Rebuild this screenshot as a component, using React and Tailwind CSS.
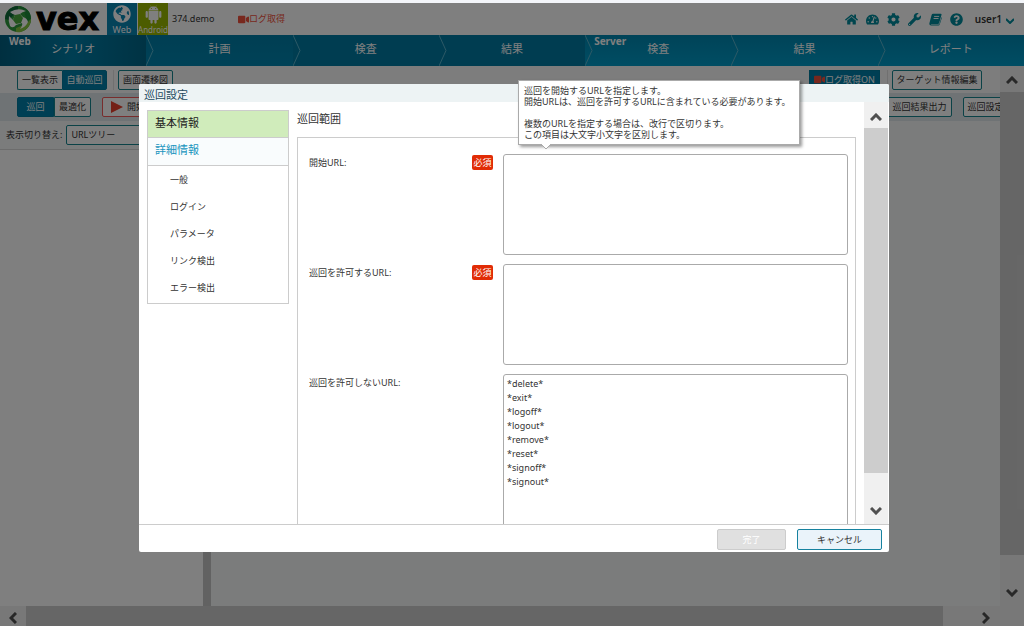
import { FaHome, FaTachometerAlt, FaCog, FaWrench, FaQuestionCircle, FaVideo, FaGlobeAmericas } from "react-icons/fa";
import { AiFillAndroid } from "react-icons/ai";

// Slanted book
const BookIcon = ({ size }) => (
  <svg viewBox="0 0 16 16" width={size} height={size} aria-hidden="true">
    <path
      d="M5 1 H14.500 Q15.800 1 15.400 2.300 L12.400 12.500 Q12 13.500 11 13.500 H3 Q2 13.500 2.300 14.300 H12.500 L15.500 5 Q16 5.300 15.800 6 L13.200 14.300 Q12.800 15.500 11.600 15.500 H2.500 Q0.200 15.300 0.400 12.800 L3.200 2.500 Q3.600 1 5 1 Z"
      fill="currentColor"
    />
    <path d="M6.300 4.200 H12.500 M5.600 6.800 H11.700" stroke="#fff" strokeWidth="1.200" />
  </svg>
);

const tabs = [
  { label: "シナリオ", group: "Web", style: "bg-linear-to-r from-[#005f80] via-[#007da6] to-[#006688]" },
  { label: "計画", style: "bg-linear-to-b from-[#007da6] to-[#0085b0]" },
  { label: "検査", style: "bg-[#007aa3]" },
  { label: "結果", style: "bg-[#007aa3]" },
  { label: "検査", group: "Server", style: "bg-linear-to-b from-[#0087b0] to-[#009bc8]" },
  { label: "結果", style: "bg-linear-to-b from-[#0087b0] to-[#009bc8]" },
  { label: "レポート", style: "bg-linear-to-b from-[#0087b0] to-[#009bc8]" },
];

const tools = [
  { name: "ホーム", Icon: FaHome },
  { name: "ダッシュボード", Icon: FaTachometerAlt },
  { name: "設定", Icon: FaCog },
  { name: "ツール", Icon: FaWrench },
  { name: "マニュアル", Icon: BookIcon },
  { name: "ヘルプ", Icon: FaQuestionCircle },
];

const menuItems = ["一般", "ログイン", "パラメータ", "リンク検出", "エラー検出"];

const denied = ["*delete*", "*exit*", "*logoff*", "*logout*", "*remove*", "*reset*", "*signoff*", "*signout*"].join("\n");

const Chevron = ({ className }) => (
  <svg viewBox="0 0 12 8" className={`w-3 h-2 ${className}`} fill="none" stroke="#505050" strokeWidth="3">
    <path d="M1 7 L6 2 L11 7" />
  </svg>
);

const Logo = () => (
  <svg viewBox="0 0 28 28" className="h-7 w-7 shrink-0" aria-hidden="true">
    <circle cx="14" cy="14" r="13" fill="#2f9a3c" />
    <path d="M1 14 A13 13 0 0 1 14 1 L14 5 L5 15 Z" fill="#0f6a3a" />
    <path d="M14 1 A13 13 0 0 1 27 14 L23 16 L20 6 Z" fill="#1f8a3a" />
    <path d="M27 14 A13 13 0 0 1 12 27 L12 23 L22 19 Z" fill="#86c440" />
    <path d="M6 7 Q14 2 22 6 Q18 7 16 9 L19 12 Q23 13 24 17 Q22 22 16 24 Q19 20 18 18 L12 20 Q9 24 6 21 Q4 16 5 11 L9 15 L11 10 Q8 9 6 7 Z" fill="#fff" />
    <path d="M11 10 L16 9 L19 13 L17 18 L12 19 L9 15 Z" fill="#4dab3f" />
  </svg>
);

const Button = ({ active, className = "", children }) => (
  <button
    className={`flex h-5 shrink-0 items-center justify-center border whitespace-nowrap ${
      active ? "border-[#007a9c] bg-[#007fa8] text-white" : "border-[#16858f] bg-white text-[#333]"
    } ${className}`}
  >
    {children}
  </button>
);

const Field = ({ id, label, required, value, className }) => (
  <div className="flex items-start">
    <div className="flex w-[184px] shrink-0 items-start justify-between">
      <label htmlFor={id} className="pt-[3px]">
        {label}
      </label>
      {required && (
        <span className="mt-px h-[15px] w-[21px] rounded-xs bg-[#e12c06] text-center leading-[15px] text-white">必須</span>
      )}
    </div>
    <textarea
      id={id}
      defaultValue={value}
      className={`ml-[10px] block flex-1 resize-none rounded-[3px] border border-[#aaa] bg-white px-[3px] py-[2px] leading-[14px] ${className}`}
    />
  </div>
);

const Header = () => (
  <header className="flex h-8 items-center bg-white">
    <a href="#top" aria-label="vex" className="flex w-[107px] items-center gap-1 pl-1">
      <Logo />
      <span className="font-['DejaVu_Sans'] text-[32px] leading-7 font-bold text-black [-webkit-text-stroke:1px_#000]">vex</span>
    </a>
    <a href="#web" className="flex h-8 w-[30px] flex-col items-center justify-between bg-[#0886b3] pt-[2px] leading-[10px] text-white">
      <FaGlobeAmericas size={18} />
      Web
    </a>
    <a href="#android" className="ml-px flex h-8 w-[30px] flex-col items-center justify-between bg-[#98b800] pt-px text-[8px] leading-[10px] text-white">
      <AiFillAndroid size={21} />
      Android
    </a>
    <span className="ml-1 w-[66px]">374.demo</span>
    <span className="flex items-center text-[#f0503c]">
      <FaVideo size={11} />
      ログ取得
    </span>
    <div className="ml-auto flex items-center gap-2 text-[#008b9c]">
      {tools.map(({ name, Icon }) => (
        <button key={name} aria-label={name}>
          <Icon size={13} />
        </button>
      ))}
    </div>
    <button className="mr-[10px] ml-3 flex items-center gap-1 text-[10px] font-semibold">
      user1
      <svg viewBox="0 0 8 6" className="mt-1 h-[6px] w-2" fill="none" stroke="#008b9c" strokeWidth="2">
        <path d="M0 1 L4 5 L8 1" />
      </svg>
    </button>
  </header>
);

const Nav = () => (
  <nav className="flex h-[31px]">
    {tabs.map(({ label, group, style }, i) => (
      <a key={i} href="#tab" className={`relative flex-1 text-center text-[11px] leading-7 text-white ${style}`}>
        {group && <span className="absolute top-0 left-[9px] text-[10px] leading-3 font-bold">{group}</span>}
        {label}
        {i < tabs.length - 1 && (
          <svg viewBox="0 0 8 31" className="absolute top-0 -right-2 z-10 h-[31px] w-2" fill="none">
            <path d="M0 0 L7 15.500 L0 31" stroke="#59b3cc" />
          </svg>
        )}
      </a>
    ))}
  </nav>
);

const Page = () => (
  <div className="flex h-full flex-col">
    <Header />
    <Nav />
    <div className="flex min-h-0 flex-1">
      <main className="flex min-w-0 flex-1 flex-col overflow-hidden">
        <div className="flex h-[27px] shrink-0 items-center bg-[#fafafa] pr-[18px] pl-[17px]">
          <Button className="w-[45px] rounded-l-xs border-r-0">一覧表示</Button>
          <Button active className="w-[45px] rounded-r-xs">自動巡回</Button>
          <div className="mr-1 ml-[6px] h-5 w-px bg-[#e0e0e0]" />
          <Button className="w-[55px] rounded-xs">画面遷移図</Button>
          <Button active className="ml-auto w-[71px]">
            <FaVideo size={11} className="text-[#f0503c]" />
            ログ取得ON
          </Button>
          <div className="mr-1 ml-[7px] h-5 w-px bg-[#e0e0e0]" />
          <Button className="w-[90px] rounded-xs">ターゲット情報編集</Button>
        </div>
        <div className="flex h-7 shrink-0 items-center bg-[#dfe6ea] pl-[17px]">
          <Button active className="w-[37px] rounded-l-xs">巡回</Button>
          <Button className="w-[37px] rounded-r-xs">最適化</Button>
          <button className="ml-[11px] flex h-5 w-[60px] shrink-0 items-center gap-1 rounded-xs border border-[#f05a5a] bg-white pl-2">
            <svg viewBox="0 0 12 12" className="h-3 w-3" fill="#e8402c">
              <path d="M0 0 L12 6 L0 12 Z" />
            </svg>
            開始
          </button>
          <Button className="ml-auto w-[65px] rounded-xs">巡回結果出力</Button>
          <Button className="-mr-2 ml-[11px] w-[45px] rounded-xs">巡回設定</Button>
        </div>
        <div className="flex h-7 shrink-0 items-center bg-[#f7f8f8] pl-[6px]">
          <label htmlFor="view">表示切り替え:</label>
          <select id="view" className="ml-1 h-5 w-[120px] appearance-none rounded-xs border border-[#16858f] bg-white px-1">
            <option>URLツリー</option>
          </select>
        </div>
        <div className="flex flex-1">
          <div className="w-[203px] border-t border-[#d8d8d8] bg-white" />
          <div className="w-2 bg-[#c4c4c4]" />
          <div className="flex-1 bg-[#f7f9f9]" />
        </div>
      </main>
      <div className="flex w-6 shrink-0 flex-col items-center bg-[#f0f0f0]">
        <div className="flex h-[26px] items-center pt-[2px]">
          <Chevron />
        </div>
        <div className="w-full flex-1 bg-[#cdcdcd]" />
        <div className="flex h-[51px] items-center pt-6">
          <Chevron className="rotate-180" />
        </div>
      </div>
    </div>
    <div className="flex h-5 shrink-0 items-center bg-[#f0f0f0] pr-6">
      <div className="flex w-[26px] justify-center pt-1">
        <Chevron className="-rotate-90" />
      </div>
      <div className="h-full flex-1 bg-[#cdcdcd]" />
      <div className="flex w-[57px] justify-end pt-1 pr-2">
        <Chevron className="rotate-90" />
      </div>
    </div>
  </div>
);

const Tooltip = () => (
  <div
    role="tooltip"
    className="absolute -top-1 left-[379px] z-20 w-[282px] border border-[#aaa] bg-white px-[5px] py-1 leading-[11px] shadow-[2px_2px_3px_rgba(0,0,0,0.4)]"
  >
    <p>巡回を開始するURLを指定します。</p>
    <p className="whitespace-nowrap">開始URLは、巡回を許可するURLに含まれている必要があります。</p>
    <p className="pt-[11px]">複数のURLを指定する場合は、改行で区切ります。</p>
    <p>この項目は大文字小文字を区別します。</p>
    <svg viewBox="0 0 10 6" className="absolute top-full left-[22px] h-[6px] w-[10px]">
      <path d="M0 0 L5 5 L10 0" fill="#fff" stroke="#aaa" />
    </svg>
  </div>
);

const Dialog = () => (
  <div role="dialog" aria-label="巡回設定" className="relative flex h-[468px] w-[750px] flex-col rounded-xs bg-white">
    <h1 className="h-[18px] shrink-0 rounded-t-xs bg-[#edf3f4] pl-[5px] text-[11px] leading-[22px] text-[#244a5e]">巡回設定</h1>
    <Tooltip />
    <div className="flex min-h-0 flex-1">
      <aside className="mt-2 ml-2 w-[142px] shrink-0 self-start border border-[#ccc]">
        <a href="#basic" className="block h-[27px] border-b border-[#ccc] bg-[#d0ecbb] pl-[7px] text-[11px] leading-6 text-[#222]">
          基本情報
        </a>
        <a href="#detail" className="block h-7 border-b border-[#ccc] bg-[#f9fcfd] pl-[7px] text-[11px] leading-6 text-[#1794bd]">
          詳細情報
        </a>
        <ul className="flex flex-col py-px">
          {menuItems.map((item) => (
            <li key={item}>
              <a href="#item" className="block h-[27px] pl-[22px] leading-[26px]">
                {item}
              </a>
            </li>
          ))}
        </ul>
      </aside>
      <section className="flex min-w-0 flex-1 flex-col overflow-hidden pr-2 pl-2">
        <h2 className="h-[35px] shrink-0 text-[11px] leading-[34px] text-[#333]">巡回範囲</h2>
        <div className="flex flex-col gap-[9px] border border-[#ccc] pt-4 pr-[7px] pl-[11px]">
          <Field id="start" label="開始URL:" required className="h-[101px]" />
          <Field id="allow" label="巡回を許可するURL:" required className="h-[101px]" />
          <Field id="deny" label="巡回を許可しないURL:" value={denied} className="h-[180px]" />
        </div>
      </section>
      <div className="mr-px flex w-6 shrink-0 flex-col items-center bg-[#f0f0f0]">
        <div className="flex h-[26px] items-center pt-1">
          <Chevron />
        </div>
        <div className="w-full flex-1 bg-[#cdcdcd]" />
        <div className="flex h-[51px] items-center pt-6">
          <Chevron className="rotate-180" />
        </div>
      </div>
    </div>
    <footer className="flex h-7 shrink-0 items-center justify-end gap-[11px] border-t border-[#ccc] pt-[2px] pr-[7px]">
      <button disabled className="h-[21px] w-[69px] rounded-xs border border-[#ccc] bg-[#e0e0e0] text-white">
        完了
      </button>
      <button className="h-[21px] w-[85px] rounded-xs border border-[#16829f] bg-[#eaf3fa]">キャンセル</button>
    </footer>
  </div>
);

export default function App() {
  return (
    <div className="flex h-screen flex-col overflow-hidden bg-[#f3f5f9] pt-[3px] font-['Noto_Sans','Noto_Sans_CJK_JP',sans-serif] text-[9px] leading-3 text-[#333]">
      <div className="relative min-h-0 flex-1">
        <Page />
        <div className="absolute inset-0 z-20 flex items-start justify-center bg-black/50 pt-[81px] pl-1">
          <Dialog />
        </div>
      </div>
    </div>
  );
}
